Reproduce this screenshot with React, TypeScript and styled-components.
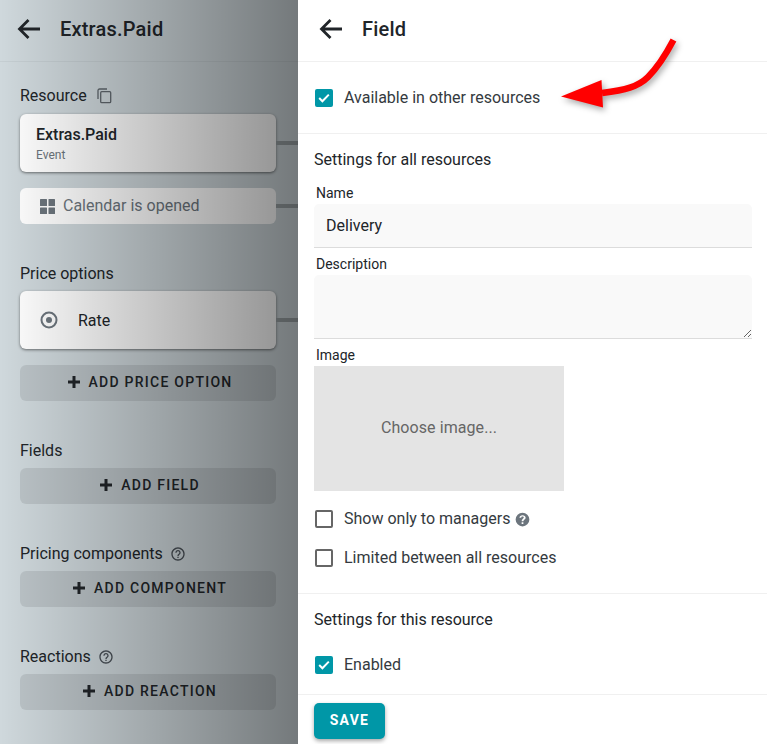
import React from "react";
import styled, { createGlobalStyle } from "styled-components";

const Global = createGlobalStyle`
  html, body { margin: 0; padding: 0; background: #fff; }
  body { font-family: Roboto, "Liberation Sans", sans-serif; color: #212529; font-size: 16px; }
  * { box-sizing: border-box; }
`;

const Page = styled.div`
  position: relative;
  display: grid;
  grid-template-columns: 298px 469px;
  width: 767px;
  height: 744px;
  overflow: hidden;
`;

const LeftPane = styled.aside`
  position: relative;
  background: #cfd8dc;
  overflow: hidden;
`;

const Shade = styled.div`
  position: absolute;
  inset: 0;
  z-index: 5;
  background: linear-gradient(to right, rgba(0, 0, 0, 0) 0%, rgba(0, 0, 0, 0.44) 100%);
`;

const Header = styled.header<{ $light?: boolean }>`
  display: flex;
  align-items: center;
  height: 62px;
  padding: 0 0 4px ${(p) => (p.$light ? 21 : 17)}px;
  border-bottom: 1px solid ${(p) => (p.$light ? "#f0f0f0" : "#c5ced2")};
`;

const BackIcon = styled.svg`
  width: 24px;
  height: 24px;
  flex: none;
  margin-right: 19px;
`;

const Title = styled.h1`
  margin: 0;
  font-size: 20px;
  line-height: 24px;
  font-weight: 500;
  letter-spacing: 0.2px;
  color: #212529;
`;

const LeftBody = styled.div`
  padding: 0 22px 0 20px;
`;

const SectionLabel = styled.div<{ $top: number; $gap?: number }>`
  display: flex;
  align-items: center;
  gap: ${(p) => p.$gap ?? 7}px;
  height: 20px;
  margin-top: ${(p) => p.$top}px;
  font-size: 16px;
  line-height: 20px;
  color: #212529;
`;

const Connected = styled.div`
  position: relative;
  border-radius: 6px;
  background: #fff;
  &::after {
    content: "";
    position: absolute;
    left: 100%;
    top: 27px;
    width: 22px;
    height: 4px;
    background: #9aa2a5;
  }
`;

const ResourceCard = styled(Connected)`
  height: 58px;
  margin-top: 8px;
  padding: 11px 16px;
  box-shadow: 0 1px 3px rgba(0, 0, 0, 0.5);
`;

const CardTitle = styled.div`
  font-size: 16px;
  line-height: 20px;
  font-weight: 500;
  color: #212529;
`;

const CardSub = styled.div`
  margin-top: 2px;
  font-size: 12px;
  line-height: 16px;
  color: #6c757d;
`;

const Chip = styled(Connected)`
  display: flex;
  align-items: center;
  height: 36px;
  margin-top: 16px;
  padding: 0 0 2px 20px;
  gap: 8px;
  font-size: 16px;
  color: #6c757d;
  &::after { top: 16px; }
  svg { margin-top: 2px; }
`;

const RateCard = styled(Connected)`
  display: flex;
  align-items: center;
  height: 58px;
  margin-top: 7px;
  padding-left: 20px;
  gap: 20px;
  font-size: 16px;
  box-shadow: 0 1px 3px rgba(0, 0, 0, 0.5);
`;

const AddButton = styled.button<{ $top: number }>`
  display: flex;
  align-items: center;
  justify-content: center;
  gap: 9px;
  width: 100%;
  height: 36px;
  margin-top: ${(p) => p.$top}px;
  padding: 0 0 2px 4px;
  border: 0;
  border-radius: 6px;
  background: rgba(0, 0, 0, 0.09);
  font-family: inherit;
  font-size: 14px;
  font-weight: 500;
  letter-spacing: 1.25px;
  color: #212529;
`;

const RightPane = styled.main`
  background: #fff;
  display: flex;
  flex-direction: column;
`;

const Section = styled.section<{ $h: number; $pt?: number }>`
  height: ${(p) => p.$h}px;
  padding: ${(p) => p.$pt ?? 0}px 16px 0;
  border-bottom: 1px solid #f0f0f0;
`;

const CheckRow = styled.label<{ $top?: number }>`
  display: flex;
  align-items: center;
  height: 20px;
  margin-top: ${(p) => p.$top ?? 0}px;
  padding-left: 1px;
  gap: 11px;
  font-size: 16px;
  line-height: 20px;
  color: #343a40;
`;

const CheckText = styled.span`
  display: inline-flex;
  align-items: center;
  gap: 5px;
`;

const Box = styled.span<{ $on?: boolean }>`
  display: flex;
  align-items: center;
  justify-content: center;
  width: 18px;
  height: 18px;
  flex: none;
  border-radius: 2px;
  background: ${(p) => (p.$on ? "#0097a7" : "#fff")};
  border: ${(p) => (p.$on ? "0" : "2px solid #666")};
`;

const GroupTitle = styled.div`
  height: 20px;
  font-size: 16px;
  line-height: 20px;
  color: #212529;
`;

const FieldLabel = styled.div<{ $top: number }>`
  height: 16px;
  margin-top: ${(p) => p.$top}px;
  padding-left: 2px;
  font-size: 14px;
  line-height: 16px;
  color: #212529;
`;

const TextBox = styled.div`
  width: 438px;
  height: 44px;
  margin-top: 3px;
  padding: 0 12px;
  display: flex;
  align-items: center;
  background: #f9f9f9;
  border-bottom: 1px solid #dcdcdc;
  border-radius: 5px 5px 0 0;
  font-size: 16px;
  color: #212529;
`;

const TextArea = styled.textarea`
  display: block;
  width: 438px;
  height: 64px;
  margin-top: 3px;
  padding: 8px 12px;
  border: 0;
  outline: 0;
  background: #f9f9f9;
  border-bottom: 1px solid #dcdcdc;
  border-radius: 5px 5px 0 0;
`;

const ImagePick = styled.div`
  display: flex;
  align-items: center;
  justify-content: center;
  width: 250px;
  height: 125px;
  margin-top: 3px;
  padding-bottom: 2px;
  background: #e4e4e4;
  font-size: 16px;
  letter-spacing: 0.08px;
  color: #666;
`;

const Footer = styled.footer`
  padding: 8px 16px 0;
`;

const SaveButton = styled.button`
  display: block;
  width: 71px;
  height: 36px;
  padding: 0 0 2px;
  border: 0;
  border-radius: 5px;
  background: #0097a7;
  color: #fff;
  font-family: inherit;
  font-size: 14px;
  font-weight: 700;
  letter-spacing: 1.25px;
  box-shadow: 0 2px 4px rgba(0, 0, 0, 0.35);
`;

const ArrowMark = styled.svg`
  position: absolute;
  left: 550px;
  top: 30px;
  width: 140px;
  height: 90px;
  overflow: visible;
  filter: drop-shadow(2px 3px 3px rgba(0, 0, 0, 0.35));
`;

const Back = () => (
  <BackIcon viewBox="0 0 24 24" fill="none">
    <path d="M23 12H3M11.500 3L2.500 12l9 9" stroke="#212529" strokeWidth="2.800" />
  </BackIcon>
);

const Tick = () => (
  <svg width="12" height="10" viewBox="0 0 12 10" fill="none">
    <path d="M1.200 5l3.200 3.200 6.400-6.600" stroke="#fff" strokeWidth="2" />
  </svg>
);

const Plus = () => (
  <svg width="12" height="12" viewBox="0 0 12 12">
    <path d="M4.500 0h3v4.500H12v3H7.500V12h-3V7.500H0v-3h4.500z" fill="#212529" />
  </svg>
);

const Help = () => (
  <svg width="16" height="16" viewBox="0 0 24 24" fill="#495057">
    <path d="M11 18h2v-2h-2v2zm1-16C6.480 2 2 6.480 2 12s4.480 10 10 10 10-4.480 10-10S17.520 2 12 2zm0 18c-4.410 0-8-3.590-8-8s3.590-8 8-8 8 3.590 8 8-3.590 8-8 8zm0-14c-2.210 0-4 1.790-4 4h2c0-1.100.9-2 2-2s2 .9 2 2c0 2-3 1.750-3 5h2c0-2.250 3-2.500 3-5 0-2.210-1.790-4-4-4z" />
  </svg>
);

const HelpSolid = () => (
  <svg width="15" height="15" viewBox="0 0 24 24" fill="#6c757d">
    <path d="M12 1a11 11 0 100 22 11 11 0 000-22zm1.400 18h-2.800v-2.600h2.800V19zm2.700-7.900c-.6.7-1.100 1-1.600 1.500-.7.6-1 1-1 2.200h-2.800c0-2 .6-2.800 1.600-3.700.7-.6 1.700-1.100 1.700-2.200 0-.9-.8-1.600-2-1.600s-2 .7-2.100 2H7.100C7.200 6.500 9.200 5 12 5s5 1.600 5 4c0 .8-.3 1.500-.9 2.100z" />
  </svg>
);

const Copy = () => (
  <svg width="16" height="16" viewBox="0 0 16 16" fill="none" stroke="#5f666c" strokeWidth="1.300">
    <rect x="4.700" y="3.700" width="10" height="11" rx="1" />
    <path d="M2 11V2.500C2 1.700 2.700 1 3.500 1H11" />
  </svg>
);

const Grid = () => (
  <svg width="15" height="15" viewBox="0 0 15 15" fill="#6c757d">
    <rect width="7" height="7" rx="0.5" />
    <rect x="8.500" width="6.500" height="7" rx="0.5" />
    <rect y="8.500" width="7" height="6.500" rx="0.5" />
    <rect x="8.500" y="8.500" width="6.500" height="6.500" rx="0.5" />
  </svg>
);

const Target = () => (
  <svg width="18" height="18" viewBox="0 0 18 18" fill="none">
    <circle cx="9" cy="9" r="7.500" stroke="#6c757d" strokeWidth="2" />
    <circle cx="9" cy="9" r="3" fill="#6c757d" />
  </svg>
);

export default function App() {
  return (
    <Page>
      <Global />
      <LeftPane>
        <Header>
          <Back />
          <Title>Extras.Paid</Title>
        </Header>
        <LeftBody>
          <SectionLabel $top={24} $gap={9}>Resource <Copy /></SectionLabel>
          <ResourceCard>
            <CardTitle>Extras.Paid</CardTitle>
            <CardSub>Event</CardSub>
          </ResourceCard>
          <Chip><Grid /> Calendar is opened</Chip>
          <SectionLabel $top={40}>Price options</SectionLabel>
          <RateCard><Target /> Rate</RateCard>
          <AddButton $top={16}><Plus /> ADD PRICE OPTION</AddButton>
          <SectionLabel $top={40}>Fields</SectionLabel>
          <AddButton $top={7}><Plus /> ADD FIELD</AddButton>
          <SectionLabel $top={40}>Pricing components <Help /></SectionLabel>
          <AddButton $top={7}><Plus /> ADD COMPONENT</AddButton>
          <SectionLabel $top={40}>Reactions <Help /></SectionLabel>
          <AddButton $top={7}><Plus /> ADD REACTION</AddButton>
        </LeftBody>
        <Shade />
      </LeftPane>
      <RightPane>
        <Header $light>
          <Back />
          <Title>Field</Title>
        </Header>
        <Section $h={72} $pt={26}>
          <CheckRow><Box $on><Tick /></Box> Available in other resources</CheckRow>
        </Section>
        <Section $h={460} $pt={16}>
          <GroupTitle>Settings for all resources</GroupTitle>
          <FieldLabel $top={15}>Name</FieldLabel>
          <TextBox>Delivery</TextBox>
          <FieldLabel $top={8}>Description</FieldLabel>
          <TextArea />
          <FieldLabel $top={8}>Image</FieldLabel>
          <ImagePick>Choose image...</ImagePick>
          <CheckRow $top={18}><Box /> <CheckText>Show only to managers <HelpSolid /></CheckText></CheckRow>
          <CheckRow $top={19}><Box /> Limited between all resources</CheckRow>
        </Section>
        <Section $h={101} $pt={16}>
          <GroupTitle>Settings for this resource</GroupTitle>
          <CheckRow $top={25}><Box $on><Tick /></Box> Enabled</CheckRow>
        </Section>
        <Footer><SaveButton>SAVE</SaveButton></Footer>
      </RightPane>
      <ArrowMark viewBox="550 30 140 90">
        <path d="M673.500 40C664 58 657 68 648 77C638 87 625 90 602 93" fill="none" stroke="#f00" strokeWidth="6.500" />
        <path d="M561 96.500L601.500 80L603 107.500Z" fill="#f00" />
      </ArrowMark>
    </Page>
  );
}
